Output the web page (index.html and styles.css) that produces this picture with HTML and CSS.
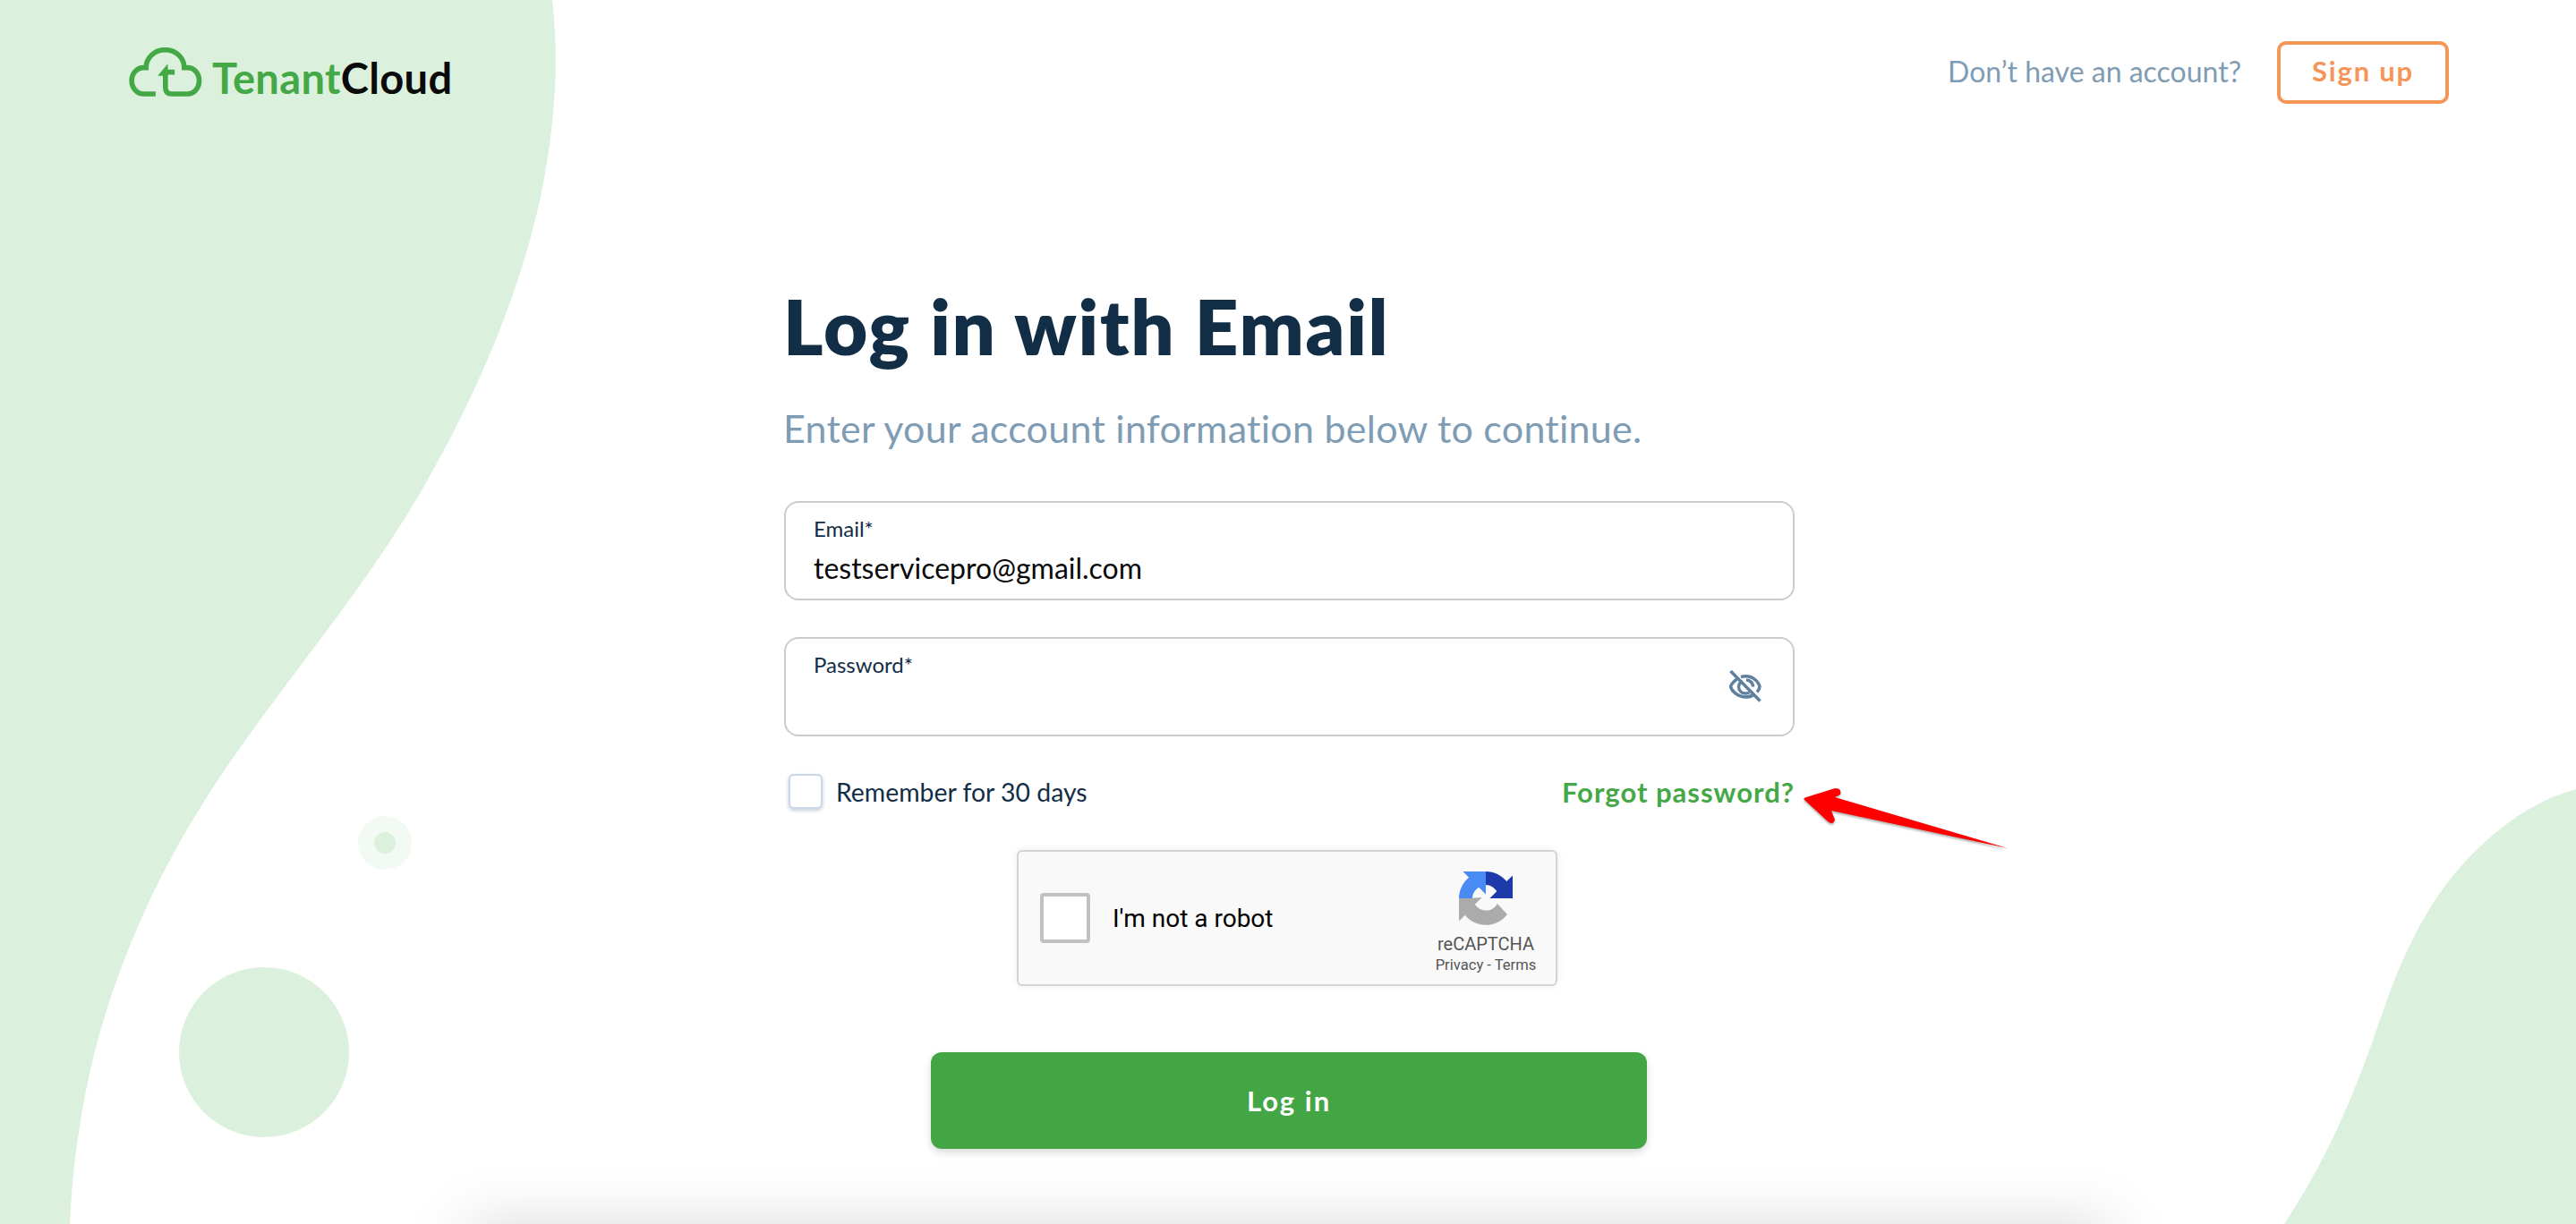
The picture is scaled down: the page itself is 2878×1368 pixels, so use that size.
FILE: index.html
```html
<!DOCTYPE html>
<html lang="en">
<head>
  <meta charset="UTF-8" />
  <title>Log in with Email</title>
  <link rel="stylesheet" href="styles.css">
</head>
<body>

  <!-- BACKGROUND SHAPES -->
  <svg class="bg-shapes" viewBox="0 0 2878 1368" aria-hidden="true">
    <path d="M0 0 H617 C624 60 622 130 605 215 C585 310 545 420 470 550 C400 670 310 770 238 880 C170 985 125 1090 100 1200 C86 1265 80 1320 78 1368 H0 Z" />
    <path d="M2878 882 C2830 895 2790 925 2755 962 C2715 1005 2685 1062 2660 1137 C2630 1225 2600 1295 2552 1368 H2878 Z" />
    <circle cx="295" cy="1176" r="95" />
    <circle cx="430" cy="942" r="30" opacity="0.35" />
    <circle cx="430" cy="942" r="12" />
  </svg>

  <div class="under-card"></div>

  <!-- HEADER -->
  <header class="top-bar">
    <a class="logo" href="#">
      <svg class="logo-icon" viewBox="133 100 245 165" aria-hidden="true">
        <path d="M222 256 H181 A39 44 0 0 1 181 168 H190 A64 60 0 0 1 318 168 H330 A38 44 0 0 1 330 256 H276 Q255 256 255 235 V175 M255 183 H286" />
        <polygon points="229,195 263,155 263,195" />
      </svg>
      <span class="logo-text"><span class="logo-green">Tenant</span>Cloud</span>
    </a>
    <div class="top-actions">
      <span class="top-hint">Don’t have an account?</span>
      <a class="signup-btn" href="#">Sign up</a>
    </div>
  </header>

  <!-- FORM -->
  <main class="login">
    <h1 class="login-title">Log in with Email</h1>
    <p class="login-sub">Enter your account information below to continue.</p>

    <div class="field">
      <div class="field-label">Email*</div>
      <div class="field-value">testservicepro@gmail.com</div>
    </div>

    <div class="field field-password">
      <div class="field-label">Password*</div>
      <div class="field-value"></div>
      <svg class="eye" viewBox="0 0 36 36" aria-hidden="true">
        <path d="M8.5 10 C3 14 1.5 18 1.5 18.5 C2.5 23 9 30 18.5 30 C22 30 25 29 27 27.5 M13 7.5 C15 7 16.5 6.8 18.5 6.8 C27 6.8 33 13.5 34 18.5 C33.8 20 32.8 22.5 31 24.5" />
        <path d="M15 12.5 C11.5 14 10.5 17 10.5 18.5 C10.5 23 14 26 18.5 26 C20 26 21 25.6 22.5 25 M19 11 C23.5 11 26.5 14.5 26.5 18.5" />
        <path d="M1.5 1 L34.5 34.5" />
      </svg>
    </div>

    <div class="login-row">
      <label class="remember">
        <span class="remember-box"></span>
        <span>Remember for 30 days</span>
      </label>
      <a class="forgot" href="#">Forgot password?</a>
    </div>

    <div class="captcha">
      <span class="captcha-box"></span>
      <span class="captcha-text">I'm not a robot</span>
      <div class="captcha-brand">
        <svg class="captcha-logo" viewBox="0 0 64 64" aria-hidden="true">
          <path fill="#1c3aa9" d="M32 0 C42 0 51 4.7 56.8 11.85 L64 4.69 V32 H36.7 L45 23.7 C42.6 19.7 37.7 16 32 16 Z" />
          <path fill="#4a8af4" d="M0 32 C0 22 4.7 13 11.85 7.2 L4.69 0 H32 V27.3 L23.7 19 C19.7 21.4 16 26.3 16 32 Z" />
          <path fill="#ababab" d="M0 32 l.03 1.37 v25.9 l7.16-7.16 c5.86 7.17 14.63 11.75 24.84 11.75 10.4 0 19.62-4.96 25.46-12.64 L45.76 38.3 a15.55 15.55 0 0 1-4.75 5.33 c-2.05 1.6-4.95 2.9-8.97 2.9 -.49 0-.86-.06-1.14-.16 -4.98-.39-9.29-3.14-11.83-7.13 l8.31-8.31 C16.9 32 5 32 0 32 Z" />
        </svg>
        <div class="captcha-name">reCAPTCHA</div>
        <div class="captcha-links">Privacy - Terms</div>
      </div>
    </div>

    <button class="login-btn" type="button">Log in</button>
  </main>

  <!-- ANNOTATION ARROW -->
  <svg class="note-arrow" viewBox="0 0 2878 1368" aria-hidden="true">
    <path d="M2243 948 L2046 906 L2050 916 Q2048 923 2042 918 L2016 894 Q2014 892 2018 891 L2050 881 Q2058 881 2056 888 L2050 891 Z" />
  </svg>

</body>
</html>
```
FILE: styles.css
```css
* { margin: 0; padding: 0; box-sizing: border-box; }
html, body {
  width: 100%;
  height: 100%;
  overflow: hidden;
  background: white;
  font-family: "Lato", sans-serif;
}

body {
  position: relative;
}

a {
  text-decoration: none;
}

/* BACKGROUND */
.bg-shapes, .note-arrow {
  position: absolute;
  top: 0; left: 0;
  width: 2878px;
  height: 1368px;
}

.bg-shapes {
  fill: #dcf1dd;
}

.note-arrow {
  fill: #fe0000;
  filter: drop-shadow(0 2px 1px rgba(0,0,0,0.3));
  pointer-events: none;
}

/* shadow of the card below the fold */
.under-card {
  position: absolute;
  top: 1368px;
  left: 622px;
  width: 1636px;
  height: 0;
  box-shadow: 0 100px 70px 100px rgba(0,0,0,0.15);
}

/* HEADER */
.top-bar {
  position: relative;
  display: flex;
  justify-content: space-between;
  align-items: flex-start;
  padding: 46px 142px 0 144px;
}

.logo {
  display: flex;
  align-items: flex-end;
  gap: 11px;
  padding-top: 7px;
}

.logo-icon {
  width: 82px;
  height: 55px;
  fill: #44a846;
}

.logo-icon path {
  fill: none;
  stroke: #44a846;
  stroke-width: 17;
}

.logo-text {
  position: relative;
  top: 2px;
  font-size: 47px;
  line-height: 46px;
  font-weight: 700;
  color: #0a0a0a;
  letter-spacing: 0.35px;
}

.logo-green {
  color: #44a846;
}

.top-actions {
  display: flex;
  align-items: center;
  gap: 40px;
}

.top-hint {
  font-size: 32px;
  color: #7f9cb5;
  padding-bottom: 4px;
}

.signup-btn {
  width: 192px;
  height: 70px;
  display: flex;
  justify-content: center;
  align-items: center;
  padding-bottom: 4px;
  border: 4px solid #f59558;
  border-radius: 10px;
  color: #f59558;
  font-size: 31px;
  font-weight: 700;
  letter-spacing: 1.8px;
}

/* FORM */
.login {
  position: relative;
  width: 1129px;
  margin-left: 876px;
  padding-top: 198px;
  display: flex;
  flex-direction: column;
}

.login-title {
  font-size: 85px;
  line-height: 100px;
  font-weight: 800;
  color: #112e46;
  letter-spacing: 1.7px;
  margin-left: -1px;
}

.login-sub {
  margin-top: 39px;
  margin-left: -1px;
  font-size: 43px;
  line-height: 52px;
  letter-spacing: 0.26px;
  color: #7f9cb5;
}

.field {
  position: relative;
  height: 111px;
  margin-top: 55px;
  padding: 14px 31px 0;
  border: 2px solid #cccccc;
  border-radius: 16px;
}

.field-password {
  margin-top: 41px;
}

.field-label {
  font-size: 24px;
  line-height: 30px;
  color: #112e46;
}

.field-value {
  margin-top: 10px;
  font-size: 32px;
  line-height: 38px;
  color: #0a0a0a;
}

.eye {
  position: absolute;
  top: 35px;
  right: 35px;
  width: 36px;
  height: 36px;
  fill: none;
  stroke: #5f7f9f;
  stroke-width: 3.5;
}

.login-row {
  display: flex;
  justify-content: space-between;
  align-items: center;
  margin-top: 42px;
}

.remember {
  display: flex;
  align-items: center;
  gap: 15px;
  padding-left: 5px;
  font-size: 28.4px;
  color: #112e46;
}

.remember-box {
  width: 38px;
  height: 39px;
  background: white;
  border: 2px solid #c9d6e8;
  border-radius: 6px;
  box-shadow: 0 2px 4px rgba(60,90,140,0.3);
}

.forgot {
  font-size: 31px;
  font-weight: 700;
  letter-spacing: 1px;
  color: #44a846;
}

/* CAPTCHA */
.captcha {
  width: 604px;
  height: 152px;
  margin: 46px 0 0 260px;
  display: flex;
  align-items: center;
  padding: 0 24px;
  background: #f9f9f9;
  border: 2px solid #d3d3d3;
  border-radius: 6px;
  box-shadow: 0 0 8px rgba(0,0,0,0.08);
  font-family: "Roboto", sans-serif;
}

.captcha-box {
  width: 56px;
  height: 56px;
  background: white;
  border: 4px solid #c1c1c1;
  border-radius: 4px;
}

.captcha-text {
  margin-left: 25px;
  font-size: 28px;
  color: black;
}

.captcha-brand {
  margin-left: auto;
  margin-right: -4px;
  padding-top: 10px;
  width: 116px;
  display: flex;
  flex-direction: column;
  align-items: center;
  color: #555555;
}

.captcha-logo {
  width: 60px;
  height: 62px;
}

.captcha-name {
  margin-top: 8px;
  font-size: 20px;
  line-height: 24px;
}

.captcha-links {
  font-size: 16.6px;
  line-height: 23px;
  white-space: nowrap;
}

.login-btn {
  width: 800px;
  height: 108px;
  margin: 74px 0 0 164px;
  background: #44a545;
  border: none;
  border-radius: 12px;
  color: white;
  font-family: inherit;
  font-size: 31px;
  font-weight: 700;
  letter-spacing: 2px;
  box-shadow: 0 4px 10px rgba(0,0,0,0.15);
}
```
